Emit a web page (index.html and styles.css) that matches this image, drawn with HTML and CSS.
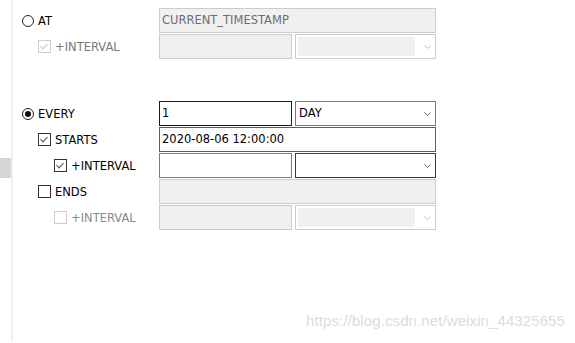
FILE: index.html
```html
<!DOCTYPE html>
<html>
<head>
    <title>Event Schedule</title>
    <meta name="viewport" content="width=device-width, initial-scale=1.0">
    <link rel="stylesheet" href="styles.css">
</head>
<body>
    <div class="window">
        <div class="sidebar">
            <div class="sidebar-tab"></div>
        </div>

        <div class="form">
            <!-- AT -->
            <div class="group">
                <div class="row">
                    <div class="opt"><span class="radio"></span>AT</div>
                    <div class="field wide disabled">CURRENT_TIMESTAMP</div>
                </div>
                <div class="row">
                    <div class="opt sub disabled"><span class="check checked"></span>+INTERVAL</div>
                    <div class="field short disabled"></div>
                    <div class="select disabled">
                        <span class="select-value"></span>
                        <span class="arrow"><svg width="7" height="4" viewBox="0 0 7 4"><path d="M0.5 0.5 L3.5 3.5 L6.5 0.5" fill="none" stroke="currentColor" stroke-width="1"/></svg></span>
                    </div>
                </div>
            </div>

            <!-- EVERY -->
            <div class="group every">
                <div class="row">
                    <div class="opt"><span class="radio on"></span>EVERY</div>
                    <div class="field short dark">1</div>
                    <div class="select">
                        <span class="select-value">DAY</span>
                        <span class="arrow"><svg width="7" height="4" viewBox="0 0 7 4"><path d="M0.5 0.5 L3.5 3.5 L6.5 0.5" fill="none" stroke="currentColor" stroke-width="1"/></svg></span>
                    </div>
                </div>
                <div class="row">
                    <div class="opt sub"><span class="check checked"></span>STARTS</div>
                    <div class="field wide focus">2020-08-06 12:00:00</div>
                </div>
                <div class="row">
                    <div class="opt subsub"><span class="check checked"></span>+INTERVAL</div>
                    <div class="field short"></div>
                    <div class="select dark">
                        <span class="select-value"></span>
                        <span class="arrow"><svg width="7" height="4" viewBox="0 0 7 4"><path d="M0.5 0.5 L3.5 3.5 L6.5 0.5" fill="none" stroke="currentColor" stroke-width="1"/></svg></span>
                    </div>
                </div>
                <div class="row">
                    <div class="opt sub"><span class="check"></span>ENDS</div>
                    <div class="field wide disabled"></div>
                </div>
                <div class="row">
                    <div class="opt subsub disabled light"><span class="check"></span>+INTERVAL</div>
                    <div class="field short disabled"></div>
                    <div class="select disabled">
                        <span class="select-value"></span>
                        <span class="arrow"><svg width="7" height="4" viewBox="0 0 7 4"><path d="M0.5 0.5 L3.5 3.5 L6.5 0.5" fill="none" stroke="currentColor" stroke-width="1"/></svg></span>
                    </div>
                </div>
            </div>
        </div>

        <div class="watermark">https://blog.csdn.net/weixin_44325655</div>
    </div>
</body>
</html>
```

FILE: styles.css
```css
body {
    margin: 0;
    padding: 0;
    background: #fff;
    font-family: "DejaVu Sans", "Noto Sans", sans-serif;
    font-size: 11.5px;
    color: #000;
}
.window {
    position: relative;
    display: flex;
    width: 575px;
    height: 343px;
    overflow: hidden;
}
.sidebar {
    width: 11px;
    height: 342px;
    border-right: 2px solid #f0f0f0;
}
.sidebar-tab {
    margin-top: 158px;
    height: 20px;
    background: #d6d6d6;
}
.form {
    padding: 8px 0 0 9px;
}
.group.every {
    margin-top: 42px;
}
.row {
    display: flex;
    align-items: center;
    height: 25px;
    margin-bottom: 1px;
}
.opt {
    display: flex;
    align-items: center;
    width: 137px;
    box-sizing: border-box;
    white-space: nowrap;
}
.opt.sub {
    padding-left: 16px;
}
.opt.subsub {
    padding-left: 32px;
}
.opt.disabled {
    color: #787878;
}
.opt.light {
    color: #8a8a8a;
}
.radio {
    width: 10px;
    height: 10px;
    border: 1px solid #222;
    border-radius: 50%;
    margin-right: 4px;
    display: flex;
    align-items: center;
    justify-content: center;
}
.radio.on::after {
    content: "";
    width: 6px;
    height: 6px;
    border-radius: 50%;
    background: #111;
}
.check {
    position: relative;
    width: 11px;
    height: 11px;
    border: 1px solid #333;
    margin-right: 4px;
    background: #fff;
}
.opt.disabled .check {
    border-color: #cccccc;
}
.check.checked::after {
    content: "";
    position: absolute;
    left: 3px;
    top: 1px;
    width: 3px;
    height: 6px;
    border-right: 1px solid #555;
    border-bottom: 1px solid #555;
    transform: rotate(45deg);
}
.opt.disabled .check.checked::after {
    border-color: #c4c4c4;
}
.field {
    box-sizing: border-box;
    height: 25px;
    border: 1px solid #7a7a7a;
    padding: 0 2px;
    line-height: 23px;
    background: #fff;
    white-space: nowrap;
    overflow: hidden;
}
.field.wide {
    width: 277px;
}
.field.short {
    width: 133px;
    margin-right: 3px;
}
.field.dark {
    border-color: #1a1a1a;
}
.field.focus {
    border-color: #0078d7;
}
.field.disabled {
    border-color: #cccccc;
    background: #f0f0f0;
    color: #6d6d6d;
}
.select {
    box-sizing: border-box;
    display: flex;
    align-items: center;
    width: 141px;
    height: 25px;
    border: 1px solid #7a7a7a;
    padding: 2px;
    background: #fff;
}
.select.dark {
    border-color: #3c3c3c;
}
.select-value {
    flex: 1;
    height: 19px;
    line-height: 19px;
    padding-left: 1px;
}
.select.disabled {
    border-color: #cccccc;
}
.select.disabled .select-value {
    background: #f0f0f0;
}
.arrow {
    width: 18px;
    display: flex;
    padding-left: 9px;
    box-sizing: border-box;
    color: #606060;
}
.select.disabled .arrow {
    color: #bdbdbd;
}
.watermark {
    position: absolute;
    right: 10px;
    top: 312px;
    font-family: "Liberation Sans", Arial, sans-serif;
    font-size: 15px;
    color: #dcdcdc;
    letter-spacing: 0.1px;
}
```
